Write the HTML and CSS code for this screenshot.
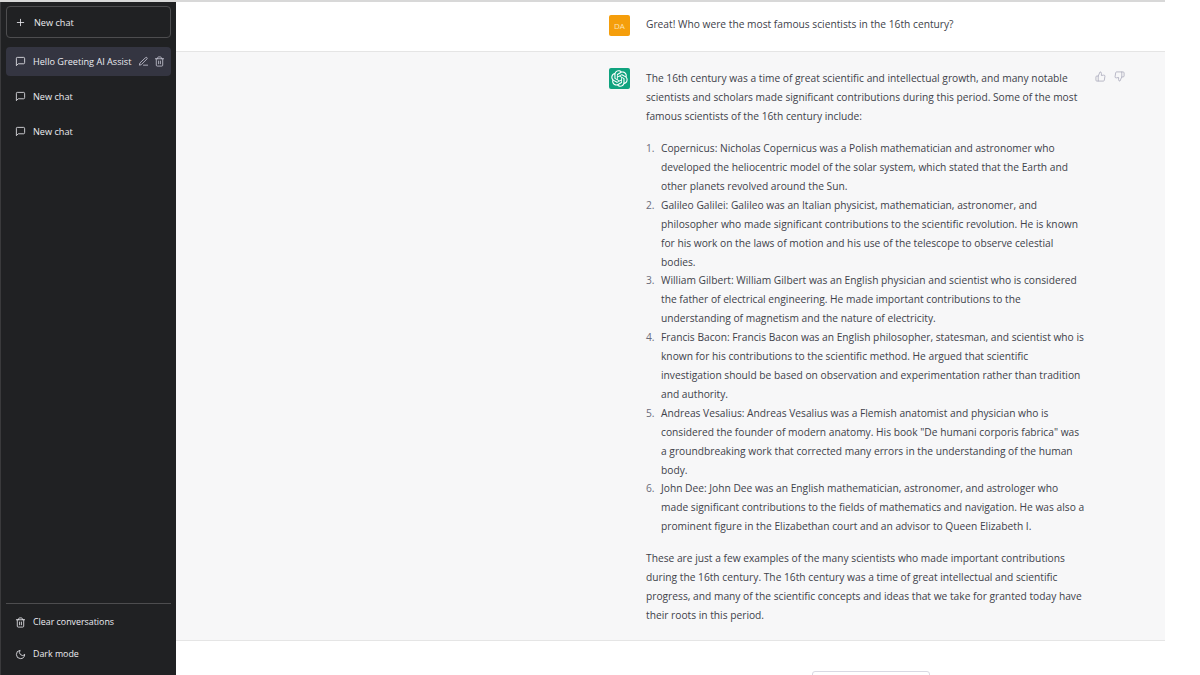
FILE: index.html
```html
<!DOCTYPE html>
<html lang="en">
<head>
<meta charset="utf-8">
<title>Chat</title>
<link rel="stylesheet" href="styles.css">
</head>
<body>
<div class="app">
  <aside class="sidebar">
    <div class="new-chat">
      <svg class="ic" viewBox="0 0 24 24"><path d="M12 5v14M5 12h14"/></svg>
      <span>New chat</span>
    </div>
    <div class="history">
      <div class="item active">
        <svg class="ic" viewBox="0 0 24 24"><path d="M21 15a2 2 0 0 1-2 2H7l-4 4V5a2 2 0 0 1 2-2h14a2 2 0 0 1 2 2z"/></svg>
        <span class="label">Hello Greeting AI Assist</span>
        <svg class="ic small" viewBox="0 0 24 24"><path d="M12 20h9"/><path d="M16.5 3.5a2.1 2.1 0 0 1 3 3L7 19l-4 1 1-4z"/></svg>
        <svg class="ic small" viewBox="0 0 24 24"><path d="M3 6h18M19 6v14a2 2 0 0 1-2 2H7a2 2 0 0 1-2-2V6m3 0V4a2 2 0 0 1 2-2h4a2 2 0 0 1 2 2v2M10 11v6M14 11v6"/></svg>
      </div>
      <div class="item">
        <svg class="ic" viewBox="0 0 24 24"><path d="M21 15a2 2 0 0 1-2 2H7l-4 4V5a2 2 0 0 1 2-2h14a2 2 0 0 1 2 2z"/></svg>
        <span class="label">New chat</span>
      </div>
      <div class="item">
        <svg class="ic" viewBox="0 0 24 24"><path d="M21 15a2 2 0 0 1-2 2H7l-4 4V5a2 2 0 0 1 2-2h14a2 2 0 0 1 2 2z"/></svg>
        <span class="label">New chat</span>
      </div>
    </div>
    <div class="side-foot">
      <div class="foot-item">
        <svg class="ic" viewBox="0 0 24 24"><path d="M3 6h18M19 6v14a2 2 0 0 1-2 2H7a2 2 0 0 1-2-2V6m3 0V4a2 2 0 0 1 2-2h4a2 2 0 0 1 2 2v2M10 11v6M14 11v6"/></svg>
        <span>Clear conversations</span>
      </div>
      <div class="foot-item">
        <svg class="ic" viewBox="0 0 24 24"><path d="M21 12.8A9 9 0 1 1 11.2 3a7 7 0 0 0 9.8 9.8z"/></svg>
        <span>Dark mode</span>
      </div>
    </div>
  </aside>
  <main class="main">
    <section class="row user">
      <div class="avatar orange">DA</div>
      <p class="question">Great! Who were the most famous scientists in the 16th century?</p>
    </section>
    <section class="row bot">
      <div class="avatar green">
        <svg viewBox="0 0 41 41" class="logo"><path d="M37.5324 16.8707C37.9808 15.5241 38.1363 14.0974 37.9886 12.6859C37.8409 11.2744 37.3934 9.91076 36.676 8.68622C35.6126 6.83404 33.9882 5.3676 32.0373 4.4985C30.0864 3.62941 27.9098 3.40259 25.8215 3.85078C24.8796 2.7893 23.7219 1.94125 22.4257 1.36341C21.1295 0.785575 19.7249 0.491269 18.3058 0.500197C16.1708 0.495044 14.0893 1.16803 12.3614 2.42214C10.6335 3.67624 9.34853 5.44666 8.6917 7.47815C7.30085 7.76286 5.98686 8.3414 4.8377 9.17505C3.68854 10.0087 2.73073 11.0782 2.02839 12.312C0.956464 14.1591 0.498905 16.2988 0.721698 18.4228C0.944492 20.5467 1.83612 22.5449 3.268 24.1293C2.81966 25.4759 2.66413 26.9026 2.81182 28.3141C2.95951 29.7256 3.40701 31.0892 4.12437 32.3138C5.18791 34.1659 6.8123 35.6322 8.76321 36.5013C10.7141 37.3704 12.8907 37.5973 14.9789 37.1492C15.9208 38.2107 17.0786 39.0587 18.3747 39.6366C19.6709 40.2144 21.0755 40.5087 22.4946 40.4998C24.6307 40.5054 26.7133 39.8321 28.4418 38.5772C30.1704 37.3223 31.4556 35.5506 32.1119 33.5179C33.5027 33.2332 34.8167 32.6547 35.9659 31.821C37.115 30.9874 38.0728 29.9178 38.7752 28.684C39.8458 26.8371 40.3023 24.6979 40.0789 22.5748C39.8556 20.4517 38.9639 18.4544 37.5324 16.8707ZM22.4978 37.8849C20.7443 37.8874 19.0459 37.2733 17.6994 36.1501C17.7601 36.117 17.8666 36.0586 17.936 36.0161L25.9004 31.4156C26.1003 31.3019 26.2663 31.137 26.3813 30.9378C26.4964 30.7386 26.5563 30.5124 26.5549 30.2825V19.0542L29.9213 20.998C29.9389 21.0068 29.9541 21.0198 29.9656 21.0359C29.977 21.052 29.9842 21.0707 29.9867 21.0902V30.3889C29.9842 32.375 29.1946 34.2791 27.7909 35.6841C26.3872 37.0892 24.4838 37.8806 22.4978 37.8849ZM6.39227 31.0064C5.51397 29.4888 5.19742 27.7107 5.49804 25.9832C5.55718 26.0187 5.66048 26.0818 5.73461 26.1244L13.699 30.7248C13.8975 30.8408 14.1233 30.902 14.3532 30.902C14.583 30.902 14.8088 30.8408 15.0073 30.7248L24.731 25.1103V28.9979C24.7321 29.0177 24.7283 29.0376 24.7199 29.0556C24.7115 29.0736 24.6988 29.0893 24.6829 29.1012L16.6317 33.7497C14.9096 34.7416 12.8643 35.0097 10.9447 34.4954C9.02506 33.9811 7.38785 32.7263 6.39227 31.0064ZM4.29707 13.6194C5.17156 12.0998 6.55279 10.9364 8.19885 10.3327C8.19885 10.4013 8.19491 10.5228 8.19491 10.6071V19.808C8.19351 20.0378 8.25334 20.2638 8.36823 20.4629C8.48312 20.6619 8.64893 20.8267 8.84863 20.9404L18.5723 26.5542L15.206 28.4979C15.1894 28.5089 15.1703 28.5155 15.1505 28.5173C15.1307 28.5191 15.1107 28.516 15.0924 28.5082L7.04046 23.8557C5.32135 22.8601 4.06716 21.2235 3.55289 19.3046C3.03862 17.3858 3.30624 15.3413 4.29707 13.6194ZM31.955 20.0556L22.2312 14.4411L25.5976 12.4981C25.6142 12.4872 25.6333 12.4805 25.6531 12.4787C25.6729 12.4769 25.6928 12.4801 25.7111 12.4879L33.7631 17.1364C34.9967 17.849 36.0017 18.8982 36.6606 20.1613C37.3194 21.4244 37.6047 22.849 37.4832 24.2684C37.3617 25.6878 36.8382 27.0432 35.9743 28.1759C35.1103 29.3086 33.9415 30.1717 32.6047 30.6641C32.6047 30.5947 32.6047 30.4733 32.6047 30.3889V21.188C32.6066 20.9586 32.5474 20.7328 32.4332 20.5338C32.319 20.3348 32.154 20.1698 31.955 20.0556ZM35.3055 15.0128C35.2464 14.9765 35.1431 14.9142 35.069 14.8717L27.1045 10.2712C26.906 10.1554 26.6803 10.0943 26.4504 10.0943C26.2206 10.0943 25.9948 10.1554 25.7963 10.2712L16.0726 15.8858V11.9982C16.0715 11.9783 16.0753 11.9585 16.0837 11.9405C16.0921 11.9225 16.1048 11.9068 16.1207 11.8949L24.1719 7.25025C25.4053 6.53903 26.8158 6.19376 28.2383 6.25482C29.6608 6.31589 31.0364 6.78077 32.2044 7.59508C33.3723 8.40939 34.2842 9.53945 34.8334 10.8531C35.3826 12.1667 35.5464 13.6095 35.3055 15.0128ZM14.2424 21.9419L10.8752 19.9981C10.8576 19.9893 10.8423 19.9763 10.8309 19.9602C10.8195 19.9441 10.8122 19.9254 10.8098 19.9058V10.6071C10.8107 9.18295 11.2173 7.78848 11.9819 6.58696C12.7466 5.38544 13.8377 4.42659 15.1275 3.82264C16.4173 3.21869 17.8524 2.99464 19.2649 3.1767C20.6775 3.35876 22.0089 3.93941 23.1034 4.85067C23.0427 4.88379 22.937 4.94215 22.8668 4.98473L14.9024 9.58517C14.7025 9.69878 14.5366 9.86356 14.4215 10.0626C14.3065 10.2616 14.2466 10.4877 14.2479 10.7175L14.2424 21.9419ZM16.071 17.9991L20.4018 15.4978L24.7325 17.9975V22.9985L20.4018 25.4983L16.071 22.9985V17.9991Z"/></svg>
      </div>
      <div class="answer">
        <p>The 16th century was a time of great scientific and intellectual growth, and many notable<br>scientists and scholars made significant contributions during this period. Some of the most<br>famous scientists of the 16th century include:</p>
        <ol>
          <li><span>Copernicus: Nicholas Copernicus was a Polish mathematician and astronomer who<br>developed the heliocentric model of the solar system, which stated that the Earth and<br>other planets revolved around the Sun.</span></li>
          <li><span>Galileo Galilei: Galileo was an Italian physicist, mathematician, astronomer, and<br>philosopher who made significant contributions to the scientific revolution. He is known<br>for his work on the laws of motion and his use of the telescope to observe celestial<br>bodies.</span></li>
          <li><span>William Gilbert: William Gilbert was an English physician and scientist who is considered<br>the father of electrical engineering. He made important contributions to the<br>understanding of magnetism and the nature of electricity.</span></li>
          <li><span>Francis Bacon: Francis Bacon was an English philosopher, statesman, and scientist who is<br>known for his contributions to the scientific method. He argued that scientific<br>investigation should be based on observation and experimentation rather than tradition<br>and authority.</span></li>
          <li><span>Andreas Vesalius: Andreas Vesalius was a Flemish anatomist and physician who is<br>considered the founder of modern anatomy. His book "De humani corporis fabrica" was<br>a groundbreaking work that corrected many errors in the understanding of the human<br>body.</span></li>
          <li><span>John Dee: John Dee was an English mathematician, astronomer, and astrologer who<br>made significant contributions to the fields of mathematics and navigation. He was also a<br>prominent figure in the Elizabethan court and an advisor to Queen Elizabeth I.</span></li>
        </ol>
        <p>These are just a few examples of the many scientists who made important contributions<br>during the 16th century. The 16th century was a time of great intellectual and scientific<br>progress, and many of the scientific concepts and ideas that we take for granted today have<br>their roots in this period.</p>
      </div>
      <div class="thumbs">
        <svg class="ic" viewBox="0 0 24 24"><path d="M14 9V5a3 3 0 0 0-3-3l-4 9v11h11.3a2 2 0 0 0 2-1.700l1.400-9A2 2 0 0 0 19.700 9zM7 22H4a2 2 0 0 1-2-2v-7a2 2 0 0 1 2-2h3"/></svg>
        <svg class="ic" viewBox="0 0 24 24"><path d="M10 15v4a3 3 0 0 0 3 3l4-9V2H5.700a2 2 0 0 0-2 1.700l-1.400 9a2 2 0 0 0 2 2.300zM17 2h2.700a2.300 2.300 0 0 1 2.300 2v7a2.300 2.300 0 0 1-2.300 2H17"/></svg>
      </div>
    </section>
    <div class="bottom">
      <div class="regen"></div>
    </div>
  </main>
</div>
</body>
</html>
```
FILE: styles.css
```css
* { box-sizing: border-box; }
html, body { margin: 0; height: 100%; overflow: hidden; background: #fff; }
body { font-family: "Open Sans", "Noto Sans", sans-serif; font-size: 9.15px; }
.app { display: flex; width: 1165px; height: 675px; border-top: 2px solid #d8d8d8; }
.sidebar { width: 176px; flex: none; background: #202123; color: #ececf1; border-left: 1px solid #3a3a3c; display: flex; flex-direction: column; padding: 4px 5px 0 5px; }
.new-chat { height: 32px; border: 1px solid #4d4d4f; border-radius: 4px; display: flex; align-items: center; gap: 8px; padding-left: 8px; flex: none; }
.ic { width: 11px; height: 11px; fill: none; stroke: currentColor; stroke-width: 1.8; stroke-linecap: round; stroke-linejoin: round; flex: none; }
.ic.small { color: #c5c5d2; }
.history { flex: 1; display: flex; flex-direction: column; gap: 6px; margin-top: 9px; }
.item { height: 29px; border-radius: 4px; display: flex; align-items: center; padding: 0 6px 0 9px; }
.item .label { margin-left: 7px; flex: 1; white-space: nowrap; }
.item .ic.small { margin-left: 5px; }
.item.active { background: #343541; }
.side-foot { border-top: 1px solid #4d4d4f; padding: 2px 0 5px; flex: none; font-size: 8.85px; }
.foot-item { height: 32px; display: flex; align-items: center; gap: 7px; padding-left: 9px; }
.main { flex: 1; display: flex; flex-direction: column; color: #40424a; font-size: 10.22px; }
.row { display: flex; border-bottom: 1px solid #e5e5e5; padding-left: 433px; }
.user { height: 50px; background: #fff; padding-top: 13px; }
.bot { height: 589px; background: #f7f7f8; padding-top: 16px; position: relative; }
.avatar { width: 21px; height: 21px; border-radius: 2px; flex: none; display: flex; align-items: center; justify-content: center; color: #fde3b5; font-size: 8px; }
.orange { background: #f59e0b; }
.green { background: #10a37f; }
.logo { width: 17px; height: 17px; fill: #fff; }
.question { margin: 0 0 0 16px; line-height: 19px; }
.answer { margin: 1.4px 0 0 16px; line-height: 18.9px; white-space: nowrap; }
.answer p { margin: 0; }
.answer ol { margin: 13px 0; padding: 0; list-style: none; counter-reset: step; }
.answer li { display: grid; grid-template-columns: 15px auto; justify-content: start; counter-increment: step; }
.answer li::before { content: counter(step) "."; color: #6b6c7b; }
.thumbs { position: absolute; left: 919px; top: 19px; display: flex; gap: 8px; color: #acacbe; }
.bottom { flex: 1; position: relative; background: #fff; }
.regen { position: absolute; left: 636px; top: 30px; width: 118px; height: 20px; border: 1px solid #d9d9e3; border-radius: 3px; }
```
